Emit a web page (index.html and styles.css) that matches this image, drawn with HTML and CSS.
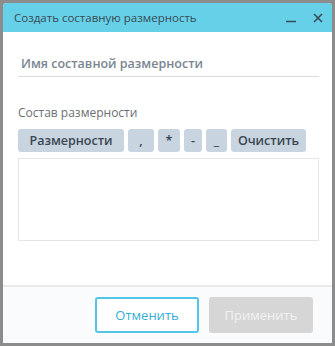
FILE: index.html
```html
<!DOCTYPE html>
<html lang="ru">
<head>
    <meta charset="UTF-8">
    <title>Создать составную размерность</title>
    <link rel="stylesheet" href="styles.css">
</head>
<body>
    <div class="dialog">
        <div class="dialog-header">
            <span class="dialog-title">Создать составную размерность</span>
            <span class="header-actions">
                <svg class="minimize" width="10" height="10" viewBox="0 0 10 10">
                    <path d="M0 8.5 H10" stroke="#3a4a52" stroke-width="1.6"/>
                </svg>
                <svg class="close" width="10" height="10" viewBox="0 0 10 10">
                    <path d="M1 1 L9 9 M9 1 L1 9" stroke="#3a4a52" stroke-width="1.6"/>
                </svg>
            </span>
        </div>

        <div class="dialog-body">
            <input class="name-input" placeholder="Имя составной размерности">

            <div class="section-label">Состав размерности</div>
            <div class="token-bar">
                <button class="token wide">Размерности</button>
                <button class="token comma">,</button>
                <button class="token small">*</button>
                <button class="token tiny">-</button>
                <button class="token underscore">_</button>
                <button class="token clear">Очистить</button>
            </div>
            <div class="formula-box"></div>
        </div>

        <div class="dialog-footer">
            <button class="btn-cancel">Отменить</button>
            <button class="btn-apply" disabled>Применить</button>
        </div>
    </div>
</body>
</html>
```

FILE: styles.css
```css
* {
    margin: 0;
    padding: 0;
    box-sizing: border-box;
}

body {
    font-family: "Open Sans", Arial, sans-serif;
    background-color: #8c8c8c;
    padding: 3px;
    height: 346px;
}

.dialog {
    width: 329px;
    height: 340px;
    background-color: white;
    border-radius: 4px 4px 0 0;
    display: flex;
    flex-direction: column;
    overflow: hidden;
}

.dialog-header {
    height: 29px;
    background-color: #66d0e8;
    display: flex;
    align-items: center;
    justify-content: space-between;
    padding: 0 9px 0 11px;
}

.dialog-title {
    font-size: 11.5px;
    color: #3a4a52;
}

.header-actions {
    display: flex;
    align-items: center;
    gap: 17px;
}

.dialog-body {
    flex: 1;
    padding: 20px 13px 0 15px;
}

.name-input {
    display: block;
    width: 301px;
    height: 25px;
    border: none;
    border-bottom: 1px solid #d8dde2;
    font-family: inherit;
    font-size: 12.5px;
    font-weight: 600;
    outline: none;
    padding: 0 0 2px 3px;
}

.name-input::placeholder {
    color: #7a8591;
}

.section-label {
    margin-top: 27px;
    font-size: 12px;
    color: #6a6f75;
}

.token-bar {
    display: flex;
    gap: 4px;
    margin-top: 8px;
}

.token {
    height: 23px;
    padding: 0;
    background-color: #c8d5e1;
    border: none;
    border-radius: 3px;
    font-family: inherit;
    font-size: 12.5px;
    font-weight: 600;
    color: #3b4550;
}

.token.wide {
    width: 106px;
}

.token.comma {
    width: 26px;
}

.token.small {
    width: 22px;
}

.token.tiny {
    width: 18px;
}

.token.underscore {
    width: 21px;
}

.token.clear {
    width: 75px;
}

.formula-box {
    margin-top: 6px;
    width: 301px;
    height: 83px;
    border: 1px solid #e3e5e7;
}

.dialog-footer {
    height: 58px;
    border-top: 2px solid #e8eaec;
    background-color: #fafbfc;
    display: flex;
    justify-content: flex-end;
    align-items: center;
    gap: 10px;
    padding: 0 19px 0 0;
}

.dialog-footer button {
    width: 104px;
    height: 36px;
    border-radius: 3px;
    font-family: inherit;
    font-size: 13px;
}

.btn-cancel {
    background-color: white;
    border: 2px solid #52c6e4;
    color: #35aed6;
}

.btn-apply {
    background-color: #d6d6d6;
    border: none;
    color: #f2f2f2;
}
```
